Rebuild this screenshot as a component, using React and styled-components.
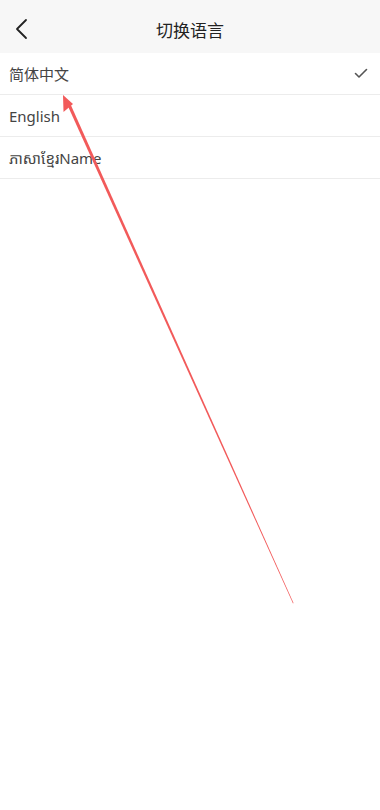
import React from "react";
import styled, { createGlobalStyle } from "styled-components";

const Global = createGlobalStyle`
  html, body { margin: 0; padding: 0; background: #fff; }
  body { font-family: "Noto Sans", "Noto Sans CJK SC", sans-serif; }
  #root { min-height: 810px; }
`;

const Page = styled.div`
  position: relative;
  width: 380px;
  height: 810px;
  background: #fff;
  overflow: hidden;
`;

const Header = styled.div`
  height: 53px;
  background: #f7f7f7;
  display: flex;
  align-items: center;
  justify-content: center;
  position: relative;
`;

const BackBtn = styled.div`
  position: absolute;
  left: 14px;
  top: 18px;
  width: 16px;
  height: 22px;
  display: flex;
`;

const Title = styled.div`
  font-family: "Noto Sans CJK SC", sans-serif;
  font-size: 17px;
  color: #222;
  margin-top: 6px;
`;

const List = styled.div`
  display: flex;
  flex-direction: column;
`;

const Row = styled.div`
  height: 41px;
  border-bottom: 1px solid #ececec;
  display: flex;
  align-items: center;
  justify-content: space-between;
  padding: 0 12px 0 9px;
`;

const Label = styled.span`
  font-family: "Noto Sans", "Noto Sans Khmer", "Noto Sans CJK SC", sans-serif;
  font-size: 15px;
  color: #444;
`;

const Overlay = styled.svg`
  position: absolute;
  left: 0;
  top: 0;
  pointer-events: none;
`;

const langs = [
  { name: "简体中文", selected: true },
  { name: "English" },
  { name: "ភាសាខ្មែរName" },
];

export default function App() {
  return (
    <Page>
      <Global />
      <Header>
        <BackBtn>
          <svg width="16" height="22" viewBox="0 0 16 22">
            <path d="M12 2 L3 11 L12 20" fill="none" stroke="#222" strokeWidth="1.8" strokeLinecap="round" strokeLinejoin="round" />
          </svg>
        </BackBtn>
        <Title>切换语言</Title>
      </Header>
      <List>
        {langs.map((l) => (
          <Row key={l.name}>
            <Label>{l.name}</Label>
            {l.selected && (
              <svg width="14" height="11" viewBox="0 0 14 11">
                <path d="M1.5 5.5 L5 9 L12.5 1.5" fill="none" stroke="#555" strokeWidth="1.6" strokeLinecap="round" strokeLinejoin="round" />
              </svg>
            )}
          </Row>
        ))}
      </List>
      <Overlay width="380" height="810" viewBox="0 0 380 810">
        <polygon points="66.5,103 69.5,102 293.5,603 293,603.5" fill="#f25a5a" />
        <polygon points="63,95 63.5,112 73,104" fill="#f25a5a" />
      </Overlay>
    </Page>
  );
}
